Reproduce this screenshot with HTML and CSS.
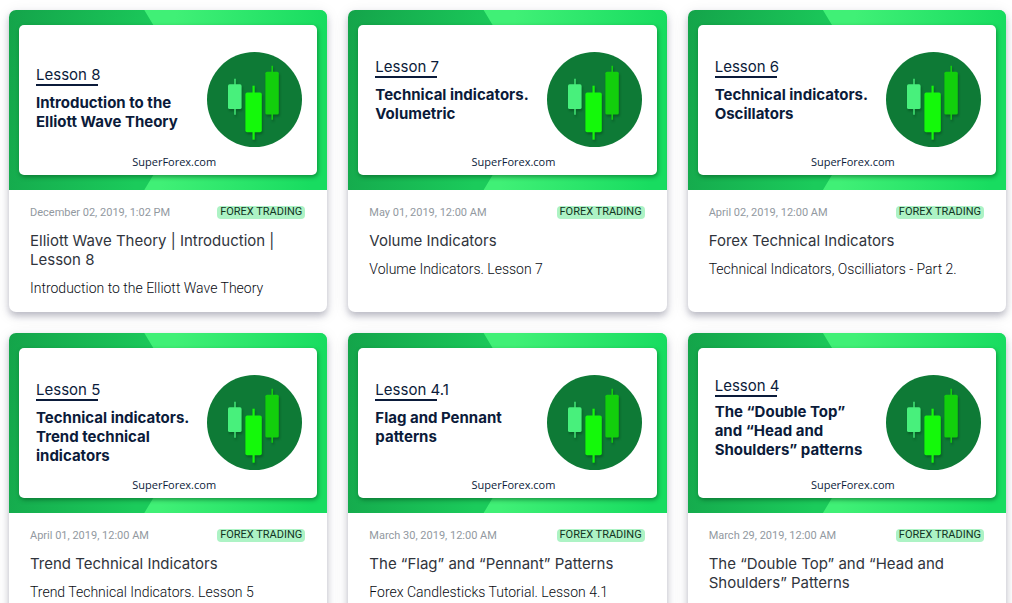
FILE: index.html
```html
<!DOCTYPE html>
<html lang="en">
<head>
<meta charset="utf-8">
<meta name="viewport" content="width=device-width, initial-scale=1">
<title>SuperForex lessons</title>
<link rel="stylesheet" href="styles.css">
</head>
<body>
<svg class="sprite" aria-hidden="true">
  <symbol id="candles" viewBox="0 0 95 95">
    <circle cx="47.5" cy="47.5" r="47.5" fill="#0e7a36"/>
    <g class="candle">
      <path d="M28 26.7V62.7" stroke="#48f07c" stroke-width="1.4"/>
      <rect x="21" y="32.3" width="13.6" height="24.7" rx="1.6" fill="#48f07c"/>
    </g>
    <g class="candle">
      <path d="M65.2 13.7V67.7" stroke="#12cf0c" stroke-width="1.6"/>
      <rect x="58.4" y="19.7" width="13.4" height="42.8" rx="1.6" fill="#12cf0c"/>
    </g>
    <g class="candle">
      <path d="M46.6 33.7V87.7" stroke="#14f90a" stroke-width="2.2"/>
      <rect x="38.4" y="40.6" width="16.4" height="39.6" rx="1.8" fill="#14f90a"/>
    </g>
  </symbol>
</svg>
<main class="lessons">
  <article class="card">
    <div class="banner"><div class="panel">
      <div class="panel-main">
        <div class="copy copy-low"><p class="lesson">Lesson 8</p><p class="topic">Introduction to the<br>Elliott Wave Theory</p></div>
        <svg class="emblem" aria-hidden="true"><use href="#candles"/></svg>
      </div>
      <p class="site">SuperForex.com</p>
    </div></div>
    <div class="body">
      <div class="meta"><time class="date">December 02, 2019, 1:02 PM</time><a class="tag" href="#">FOREX TRADING</a></div>
      <h2 class="title">Elliott Wave Theory | Introduction | Lesson 8</h2>
      <p class="summary">Introduction to the Elliott Wave Theory</p>
    </div>
  </article>
  <article class="card">
    <div class="banner"><div class="panel">
      <div class="panel-main">
        <div class="copy"><p class="lesson">Lesson 7</p><p class="topic">Technical indicators.<br>Volumetric</p></div>
        <svg class="emblem" aria-hidden="true"><use href="#candles"/></svg>
      </div>
      <p class="site">SuperForex.com</p>
    </div></div>
    <div class="body">
      <div class="meta"><time class="date">May 01, 2019, 12:00 AM</time><a class="tag" href="#">FOREX TRADING</a></div>
      <h2 class="title">Volume Indicators</h2>
      <p class="summary">Volume Indicators. Lesson 7</p>
    </div>
  </article>
  <article class="card">
    <div class="banner"><div class="panel">
      <div class="panel-main">
        <div class="copy"><p class="lesson">Lesson 6</p><p class="topic">Technical indicators.<br>Oscillators</p></div>
        <svg class="emblem" aria-hidden="true"><use href="#candles"/></svg>
      </div>
      <p class="site">SuperForex.com</p>
    </div></div>
    <div class="body">
      <div class="meta"><time class="date">April 02, 2019, 12:00 AM</time><a class="tag" href="#">FOREX TRADING</a></div>
      <h2 class="title">Forex Technical Indicators</h2>
      <p class="summary">Technical Indicators, Oscilliators - Part 2.</p>
    </div>
  </article>
  <article class="card">
    <div class="banner"><div class="panel">
      <div class="panel-main">
        <div class="copy"><p class="lesson">Lesson 5</p><p class="topic">Technical indicators.<br>Trend technical<br>indicators</p></div>
        <svg class="emblem" aria-hidden="true"><use href="#candles"/></svg>
      </div>
      <p class="site">SuperForex.com</p>
    </div></div>
    <div class="body">
      <div class="meta"><time class="date">April 01, 2019, 12:00 AM</time><a class="tag" href="#">FOREX TRADING</a></div>
      <h2 class="title">Trend Technical Indicators</h2>
      <p class="summary">Trend Technical Indicators. Lesson 5</p>
    </div>
  </article>
  <article class="card">
    <div class="banner"><div class="panel">
      <div class="panel-main">
        <div class="copy"><p class="lesson">Lesson 4.1</p><p class="topic">Flag and Pennant<br>patterns</p></div>
        <svg class="emblem" aria-hidden="true"><use href="#candles"/></svg>
      </div>
      <p class="site">SuperForex.com</p>
    </div></div>
    <div class="body">
      <div class="meta"><time class="date">March 30, 2019, 12:00 AM</time><a class="tag" href="#">FOREX TRADING</a></div>
      <h2 class="title">The “Flag” and “Pennant” Patterns</h2>
      <p class="summary">Forex Candlesticks Tutorial. Lesson 4.1</p>
    </div>
  </article>
  <article class="card">
    <div class="banner"><div class="panel">
      <div class="panel-main">
        <div class="copy copy-high"><p class="lesson">Lesson 4</p><p class="topic">The “Double Top”<br>and “Head and<br>Shoulders” patterns</p></div>
        <svg class="emblem" aria-hidden="true"><use href="#candles"/></svg>
      </div>
      <p class="site">SuperForex.com</p>
    </div></div>
    <div class="body">
      <div class="meta"><time class="date">March 29, 2019, 12:00 AM</time><a class="tag" href="#">FOREX TRADING</a></div>
      <h2 class="title">The “Double Top” and “Head and Shoulders” Patterns</h2>
    </div>
  </article>
</main>
</body>
</html>
```

FILE: styles.css
```css
* { box-sizing: border-box; }
html { scrollbar-width: none; }
body {
  margin: 0;
  background: #fff;
  color: #212630;
  font-family: Roboto, sans-serif;
}
p, h2 { margin: 0; }
.sprite { position: absolute; width: 0; height: 0; }

.lessons {
  display: grid;
  grid-template-columns: repeat(3, minmax(0, 1fr));
  gap: 21px;
  padding: 10px 6px 21px 9px;
}
.card {
  border-radius: 7px;
  background: #fff;
  box-shadow: 0 4px 6px rgba(35, 35, 65, .26), 0 3px 16px rgba(35, 35, 65, .09);
}

/* Banner */
.banner {
  position: relative;
  padding: 15px 10px;
  border-radius: 7px 7px 0 0;
  overflow: hidden;
  background: linear-gradient(100deg, #14a44a, #1bcb5b 45%);
}
.banner::before {
  content: "";
  position: absolute;
  inset: 0;
  background: linear-gradient(95deg, #40f076 50%, #18dc60 95%);
  clip-path: polygon(42.5% 0, 59.5% 50%, 42.5% 100%, 100% 100%, 100% 0);
}
.panel {
  position: relative;
  border-radius: 5px;
  background: #fff;
  color: #0b1b3a;
  box-shadow: 1px 2px 4px rgba(0, 70, 25, .5);
}
.panel-main {
  display: flex;
  justify-content: space-between;
  padding: 27px 15px 0 17px;
}
.copy { padding-top: 5px; white-space: nowrap; }
.copy-low { padding-top: 13px; }
.copy-high { padding-top: 1px; }
.lesson {
  position: relative;
  font: 400 15px/20px Inter, sans-serif;
}
.lesson::after {
  content: "";
  position: absolute;
  left: 0;
  bottom: -1px;
  width: 62px;
  height: 2px;
  background: #0b1b3a;
}
.topic {
  margin-top: 8px;
  font: 700 15px/19px Inter, sans-serif;
}
.copy-high .topic { margin-top: 6px; }
.emblem { flex: none; width: 95px; height: 95px; }
.candle { filter: drop-shadow(1px 2px 1px rgba(0, 50, 15, .4)); }
.site {
  padding: 7px 0 5px 12px;
  font: 400 11px/16px "Open Sans", sans-serif;
  text-align: center;
}

/* Text */
.body { padding: 14px 22px 14px 21px; }
.meta {
  display: flex;
  justify-content: space-between;
  align-items: center;
  font-size: 11px;
  line-height: 16px;
}
.date { padding-top: 1px; line-height: 15px; color: #92999f; }
.tag {
  padding: 0 3px 1px;
  border-radius: 4px;
  background: #adf3c5;
  color: #12331f;
  line-height: 12px;
  text-decoration: none;
}
.title {
  margin-top: 11px;
  color: #30343c;
  font: 400 15px/19px Inter, sans-serif;
}
.summary {
  margin-top: 10px;
  color: #080b12;
  font-size: 14px;
  font-weight: 300;
  line-height: 19px;
}
```
